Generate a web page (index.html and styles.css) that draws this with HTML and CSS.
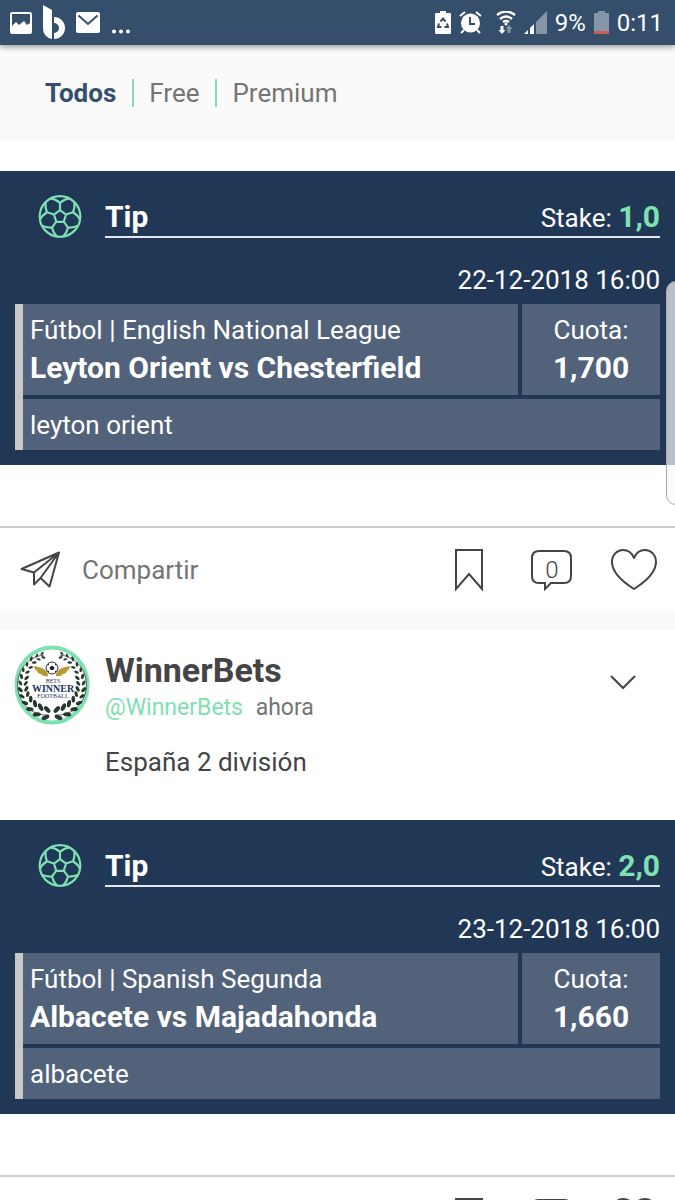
FILE: index.html
```html
<!DOCTYPE html>
<html lang="es">
  <head>
    <meta charset="UTF-8" />
    <meta name="viewport" content="width=device-width, initial-scale=1" />
    <title>WinnerBets</title>
    <link rel="stylesheet" href="styles.css" />
  </head>
  <body>
    <!-- shared icons -->
    <svg class="sprite" aria-hidden="true">
      <symbol id="ball" viewBox="-22 -22 44 44">
        <g fill="none" stroke="#7fe0b2" stroke-width="2.2" stroke-linejoin="round">
          <circle r="20.800" />
          <path d="M0 -6.500 L6.200 -2 L3.800 5.500 L-3.800 5.500 L-6.200 -2 Z" />
          <g id="seam"><path d="M0 -6.500 V-14 M-9.500 -18.500 Q-5 -18 0 -14 Q5 -18 9.500 -18.500" /></g>
          <use href="#seam" transform="rotate(72)" />
          <use href="#seam" transform="rotate(144)" />
          <use href="#seam" transform="rotate(216)" />
          <use href="#seam" transform="rotate(288)" />
        </g>
      </symbol>
      <symbol id="plane" viewBox="0 0 42 38">
        <path d="M1.500 18 L39 1.500 L29.500 35.500 L20.500 27 L14 33.500 L14 21.500 Z M14 21.500 L39 1.500 L20.500 27" fill="none" stroke="#444" stroke-width="2" stroke-linejoin="round" />
      </symbol>
      <symbol id="bookmark" viewBox="0 0 28 42">
        <path d="M1 1 H27 V40 L14 25 L1 40 Z" fill="none" stroke="#444" stroke-width="2" />
      </symbol>
      <symbol id="comment" viewBox="0 0 42 42">
        <path d="M8 2 H33 Q40 2 40 9 V27 Q40 34 33 34 H20 L14 40 V34 H8 Q1 34 1 27 V9 Q1 2 8 2 Z" fill="none" stroke="#444" stroke-width="2" />
      </symbol>
      <symbol id="heart" viewBox="0 0 46 42">
        <path d="M23 40 C12 33 1 24 1 13 C1 6 6 1 12 1 C17 1 21 4 23 9 C25 4 29 1 34 1 C40 1 45 6 45 13 C45 24 34 33 23 40 Z" fill="none" stroke="#444" stroke-width="2" stroke-linejoin="round" />
      </symbol>
    </svg>

    <div class="app">
      <header class="status">
        <div class="status-side">
          <svg width="22" height="22" viewBox="0 0 22 22">
            <path d="M2 0 H20 Q22 0 22 2 V20 Q22 22 20 22 H2 Q0 22 0 20 V2 Q0 0 2 0 Z M2 2 V14 L6 10 L9 13 L14 9 L17 13 L20 11 V2 Z" fill="#fff" fill-rule="evenodd" />
          </svg>
          <svg width="22" height="35" viewBox="0 0 22 35">
            <path d="M0 0 L9 5 V34 Q0 32 0 23 Z M11 12 A11 11 0 0 1 11 34 V28 A5 5 0 0 0 11 18 Z" fill="#fff" />
          </svg>
          <svg width="24" height="21" viewBox="0 0 24 21">
            <rect width="24" height="21" rx="2" fill="#fff" />
            <path d="M2.500 3.500 L12 12 L21.500 3.500" fill="none" stroke="#344e6c" stroke-width="2" />
          </svg>
          <svg class="dots" width="20" height="5" viewBox="0 0 20 5" fill="#fff">
            <circle cx="3" cy="2.500" r="2" />
            <circle cx="10" cy="2.500" r="2" />
            <circle cx="17" cy="2.500" r="2" />
          </svg>
        </div>
        <div class="status-side status-right">
          <svg width="16" height="23" viewBox="0 0 16 23">
            <path d="M5 0 H11 V2 H15 Q16 2 16 3 V22 Q16 23 15 23 H1 Q0 23 0 22 V3 Q0 2 1 2 H5 Z" fill="#fff" />
            <path d="M5.500 10.500 L8 7.500 L10.500 10.500 M12 12.500 L13 16 H9.500 M6.500 16 H3 L4 12.500" fill="none" stroke="#344e6c" stroke-width="2" />
          </svg>
          <svg width="23" height="23" viewBox="0 0 23 23">
            <path d="M1 5 L6 1 M22 5 L17 1 M5 19 L2 22 M18 19 L21 22" fill="none" stroke="#fff" stroke-width="2" />
            <circle cx="11.500" cy="12" r="9.500" fill="#fff" />
            <path d="M11 6 V13 H16" fill="none" stroke="#344e6c" stroke-width="2" />
          </svg>
          <svg class="wifi" width="20" height="23" viewBox="0 0 20 23">
            <path d="M1 4 Q10 -3 19 4 M4 8 Q10 3 16 8 M7 11 Q10 9 13 11" fill="none" stroke="#fff" stroke-width="2.400" />
            <circle cx="10" cy="13" r="1.500" fill="#fff" />
            <path d="M4.500 15 H7.500 V19 H9.500 L6 23 L2.500 19 H4.500 Z" fill="#fff" />
            <path d="M11.500 22 V18 H9.500 L13 14 L16.500 18 H14.500 V22 Z" fill="#8595aa" />
          </svg>
          <svg width="23" height="23" viewBox="0 0 23 23">
            <path d="M23 0 V23 H12 V11 Z" fill="#8595aa" />
            <path d="M10 13 V23 H6 V17 Z M4 19 V23 H0 Z" fill="#fff" />
          </svg>
          <span>9%</span>
          <svg width="15" height="23" viewBox="0 0 15 23">
            <path d="M4 0 H11 V2 H15 V20 H0 V2 H4 Z" fill="#8595aa" />
            <path d="M0 20 H15 V23 H0 Z" fill="#c8604f" />
          </svg>
          <span>0:11</span>
        </div>
      </header>

      <nav class="tabs">
        <a class="tab active" href="#todos">Todos</a>
        <a class="tab" href="#free">Free</a>
        <a class="tab" href="#premium">Premium</a>
      </nav>

      <main>
        <article class="post">
          <section class="tip">
            <div class="tip-head">
              <svg class="ball"><use href="#ball" /></svg>
              <div class="tip-title">
                <h2>Tip</h2>
                <p>Stake: <strong>1,0</strong></p>
              </div>
            </div>
            <time class="date" datetime="2018-12-22T16:00">22-12-2018 16:00</time>
            <div class="bet">
              <div class="cell">
                <p>Fútbol | English National League</p>
                <p class="strong">Leyton Orient vs Chesterfield</p>
              </div>
              <div class="cell odds">
                <p>Cuota:</p>
                <p class="strong">1,700</p>
              </div>
              <p class="cell pick">leyton orient</p>
            </div>
          </section>
          <footer class="actions">
            <button class="share" type="button">
              <svg width="42" height="38"><use href="#plane" /></svg>
              Compartir
            </button>
            <button type="button" aria-label="Guardar">
              <svg width="28" height="42"><use href="#bookmark" /></svg>
            </button>
            <button class="comment" type="button" aria-label="Comentarios">
              <svg width="42" height="42"><use href="#comment" /></svg>
              <span>0</span>
            </button>
            <button type="button" aria-label="Me gusta">
              <svg width="46" height="42"><use href="#heart" /></svg>
            </button>
          </footer>
        </article>

        <article class="post">
          <header class="author">
            <svg class="avatar" viewBox="-38 -40 76 80">
              <defs>
                <g id="leaf" fill="#26382f">
                  <ellipse cx="0" cy="-3.500" rx="3.400" ry="1.800" transform="rotate(-35 0 -3)" />
                  <ellipse cx="0" cy="3.500" rx="3.400" ry="1.800" transform="rotate(35 0 3)" />
                </g>
                <g id="branch">
                  <path d="M3 30 A29 30 0 0 0 8 -30" fill="none" stroke="#5d6c60" />
                  <use href="#leaf" transform="rotate(-12) translate(0 29) scale(1.200)" />
                  <use href="#leaf" transform="rotate(-28) translate(0 29) scale(1.200)" />
                  <use href="#leaf" transform="rotate(-43) translate(0 29) scale(1.100)" />
                  <use href="#leaf" transform="rotate(-57) translate(0 29)" />
                  <use href="#leaf" transform="rotate(-70) translate(0 29) scale(.900)" />
                  <use href="#leaf" transform="rotate(-82) translate(0 29) scale(.900)" />
                  <use href="#leaf" transform="rotate(-94) translate(0 29) scale(.800)" />
                  <use href="#leaf" transform="rotate(-106) translate(0 29) scale(.800)" />
                  <use href="#leaf" transform="rotate(-118) translate(0 30) scale(.700)" />
                  <use href="#leaf" transform="rotate(-130) translate(0 30) scale(.700)" />
                  <use href="#leaf" transform="rotate(-142) translate(0 31) scale(.700)" />
                  <use href="#leaf" transform="rotate(-153) translate(0 31) scale(.600)" />
                  <use href="#leaf" transform="rotate(-163) translate(0 31) scale(.600)" />
                </g>
              </defs>
              <ellipse rx="35.500" ry="37.500" fill="#fff" stroke="#7fe0b2" stroke-width="4" />
              <use href="#branch" />
              <use href="#branch" transform="scale(-1 1)" />
              <path id="wing" d="M-4 -11 Q-7 -18 -18 -19 Q-18 -16 -15 -14 Q-14 -11 -11 -11 Q-9 -8 -4 -9 Z" fill="#b59a34" />
              <use href="#wing" transform="scale(-1 1)" />
              <circle cy="-17" r="6" fill="#fff" stroke="#333" />
              <path d="M0 -19.500 L2.500 -17.500 L1.500 -15 H-1.500 L-2.500 -17.500 Z M-5 -19 L-3 -22 L-3 -20 Z M5 -19 L3 -22 L3 -20 Z M-5 -15 L-3 -12 L-3 -14 Z M5 -15 L3 -12 L3 -14 Z" fill="#222" />
              <g text-anchor="middle" fill="#1c3461">
                <text class="crest-small" x="1" y="-2">BETS</text>
                <text class="crest-name" x="1" y="7">WINNER</text>
                <text class="crest-small" x="1" y="13">FOOTBALL</text>
              </g>
            </svg>
            <div class="author-text">
              <h1>WinnerBets</h1>
              <p class="meta"><a href="#winnerbets">@WinnerBets</a> <span>ahora</span></p>
              <p class="message">España 2 división</p>
            </div>
            <button class="more" type="button" aria-label="Más opciones">
              <svg width="26" height="15" viewBox="0 0 26 15">
                <path d="M1 1 L13 13 L25 1" fill="none" stroke="#444" stroke-width="2" />
              </svg>
            </button>
          </header>
          <section class="tip">
            <div class="tip-head">
              <svg class="ball"><use href="#ball" /></svg>
              <div class="tip-title">
                <h2>Tip</h2>
                <p>Stake: <strong>2,0</strong></p>
              </div>
            </div>
            <time class="date" datetime="2018-12-23T16:00">23-12-2018 16:00</time>
            <div class="bet">
              <div class="cell">
                <p>Fútbol | Spanish Segunda</p>
                <p class="strong">Albacete vs Majadahonda</p>
              </div>
              <div class="cell odds">
                <p>Cuota:</p>
                <p class="strong">1,660</p>
              </div>
              <p class="cell pick">albacete</p>
            </div>
          </section>
          <footer class="actions">
            <button class="share" type="button">
              <svg width="42" height="38"><use href="#plane" /></svg>
              Compartir
            </button>
            <button type="button" aria-label="Guardar">
              <svg width="28" height="42"><use href="#bookmark" /></svg>
            </button>
            <button class="comment" type="button" aria-label="Comentarios">
              <svg width="42" height="42"><use href="#comment" /></svg>
              <span>0</span>
            </button>
            <button type="button" aria-label="Me gusta">
              <svg width="46" height="42"><use href="#heart" /></svg>
            </button>
          </footer>
        </article>
      </main>

      <!-- edge panel handle -->
      <div class="edge-handle"></div>
    </div>
  </body>
</html>
```
FILE: styles.css
```css
:root {
  --bar: #344e6c;
  --navy: #213756;
  --cell: #51627a;
  --green: #7fe0b2;
  --grey: #757575;
  --dark: #444;
}

* {
  box-sizing: border-box;
  margin: 0;
  padding: 0;
}

body {
  font-family: Roboto, "Liberation Sans", sans-serif;
  font-size: 26px;
  line-height: 38px;
  color: var(--dark);
  background: #fff;
}

a {
  color: inherit;
  text-decoration: none;
}

button {
  border: 0;
  background: none;
  font: inherit;
  color: inherit;
  cursor: pointer;
}

svg {
  display: block;
  flex: none;
}

.sprite {
  position: absolute;
  width: 0;
  height: 0;
}

.app {
  position: relative;
  height: 100vh;
  overflow: hidden;
}

/* status bar */
.status {
  position: relative;
  display: flex;
  justify-content: space-between;
  height: 45px;
  padding: 0 12px 0 10px;
  background: var(--bar);
  box-shadow: 0 2px 6px rgba(0, 0, 0, 0.4);
  color: #fff;
}

.status-side {
  display: flex;
  align-items: center;
  gap: 11px;
}

.status-right {
  gap: 8px;
  font-size: 24px;
}

.dots {
  align-self: flex-end;
  margin-bottom: 11px;
}

.wifi {
  margin-left: 6px;
}

/* filter tabs */
.tabs {
  display: flex;
  align-items: center;
  height: 95px;
  padding: 0 45px;
  background: #fafafa;
  color: var(--grey);
}

.tab {
  line-height: 28px;
}

.tab + .tab {
  margin-left: 16px;
  padding-left: 15px;
  border-left: 2px solid var(--green);
}

.tab.active {
  font-weight: 700;
  color: var(--bar);
}

/* posts */
.post {
  padding-top: 31px;
}

.post + .post {
  padding-top: 0;
  border-top: 19px solid #fafafa;
}

.author {
  display: flex;
  gap: 15px;
  height: 190px;
  padding: 15px 39px 0 14px;
}

.avatar {
  width: 76px;
  height: 80px;
}

.crest-small {
  font: 6px "Liberation Serif", serif;
}

.crest-name {
  font: bold 10px "Liberation Serif", serif;
}

.author-text {
  flex: 1;
}

.author h1 {
  font-size: 34px;
  line-height: 50px;
}

.meta {
  font-size: 23px;
  line-height: 26px;
  color: var(--grey);
}

.meta a {
  margin-right: 7px;
  color: var(--green);
}

.message {
  margin-top: 22px;
}

.more {
  align-self: flex-start;
  margin-top: 30px;
}

/* tip card */
.tip {
  padding: 24px 15px 15px;
  background: var(--navy);
  color: #fff;
}

.tip-head {
  display: flex;
  gap: 23px;
  padding-left: 23px;
}

.ball {
  width: 44px;
  height: 43px;
}

.tip-title {
  flex: 1;
  display: flex;
  align-items: baseline;
  justify-content: space-between;
  height: 43px;
  border-bottom: 2px solid #e6e6f0;
  line-height: 44px;
}

.tip-title h2,
.tip-title strong,
.strong {
  font-size: 30px;
  font-weight: 700;
}

.tip-title strong {
  color: var(--green);
}

.date {
  display: block;
  margin: 23px 0 5px;
  text-align: right;
}

.bet {
  display: grid;
  grid-template-columns: 1fr 138px;
  gap: 4px;
  border-left: 8px solid #c8c8c8;
}

.cell {
  padding: 7px 7px 8px;
  background: var(--cell);
}

.odds {
  text-align: center;
}

.pick {
  grid-column: 1 / -1;
  padding-bottom: 6px;
}

/* post actions */
.actions {
  display: flex;
  align-items: center;
  gap: 38px;
  height: 85px;
  margin-top: 61px;
  padding: 0 18px 0 20px;
  border-top: 2px solid #ccc;
  line-height: 26px;
}

.share {
  display: flex;
  align-items: center;
  gap: 20px;
  margin-right: auto;
  color: var(--grey);
}

.comment {
  position: relative;
  margin-left: 10px;
}

.comment span {
  position: absolute;
  inset: 8px 0 auto;
  font-size: 24px;
  font-weight: 300;
}

.edge-handle {
  position: absolute;
  top: 281px;
  right: -2px;
  width: 11px;
  height: 224px;
  border: 1px solid #aaa;
  border-radius: 10px 0 0 10px;
  background: rgba(250, 250, 250, 0.7);
}
```
